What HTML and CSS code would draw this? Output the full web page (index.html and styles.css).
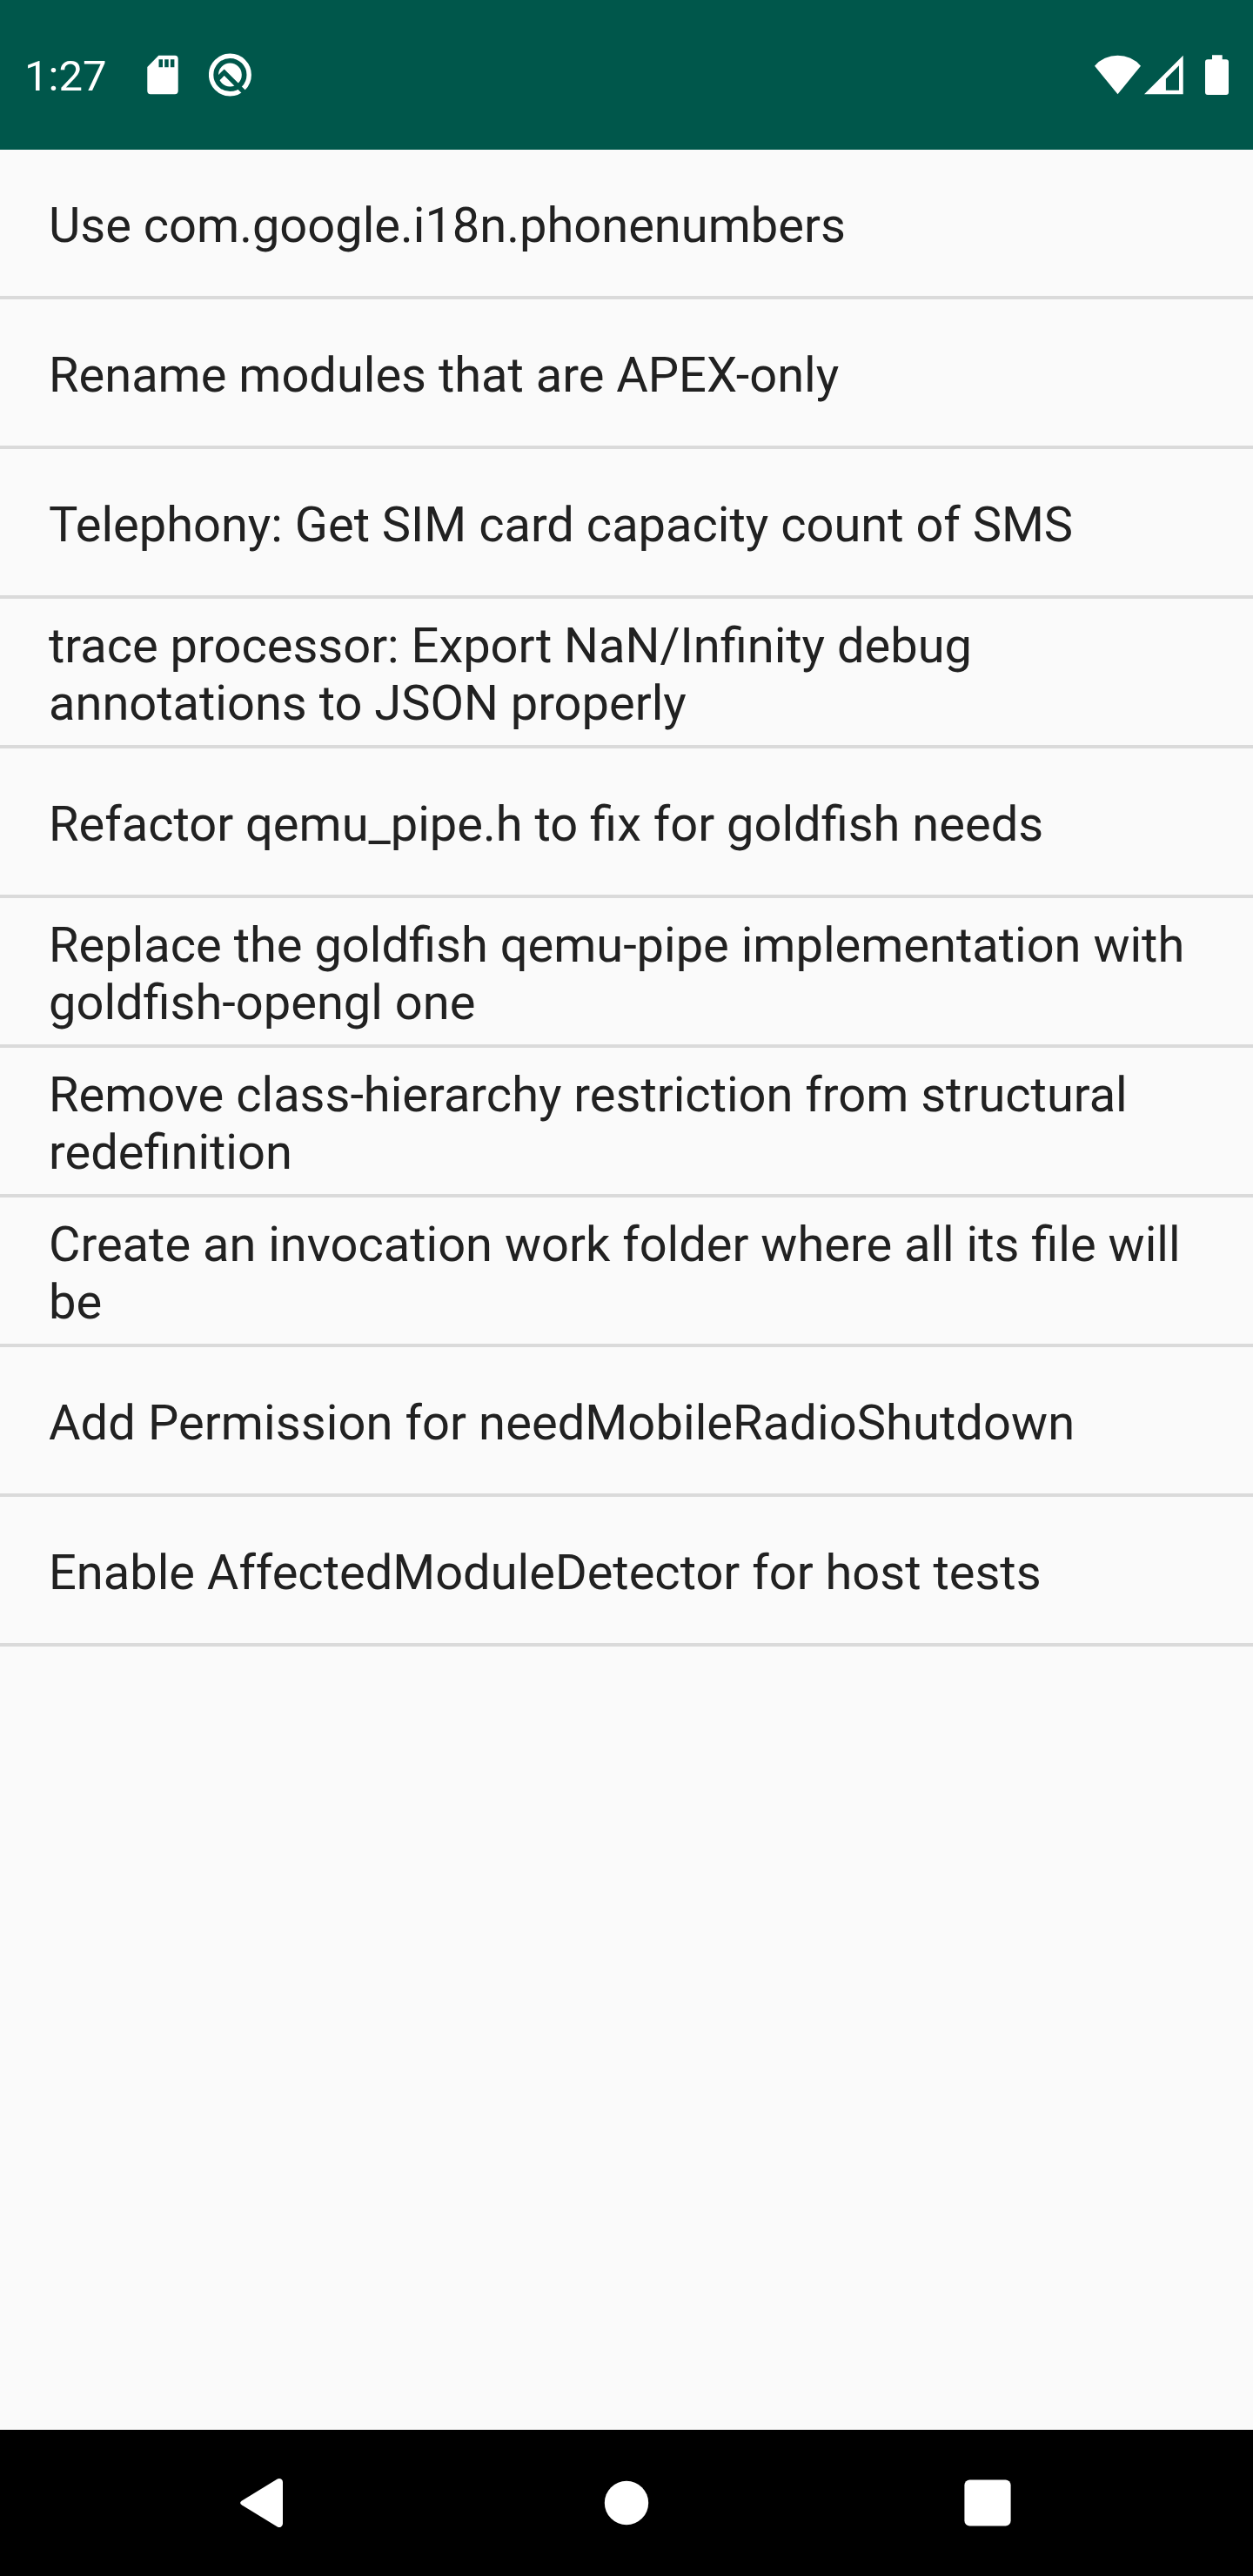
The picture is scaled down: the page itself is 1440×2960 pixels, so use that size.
FILE: index.html
```html
<!DOCTYPE html>
<html lang="en">
<head>
<meta charset="utf-8">
<title>Changes</title>
<link rel="stylesheet" href="styles.css">
</head>
<body>
<header class="status">
  <span class="clock">1:27</span>
  <svg class="sd" width="36" height="46" viewBox="0 0 36 46"><path fill="#fff" fill-rule="evenodd" d="M13.3 .7H32Q35.7 .7 35.7 4.7V41.2Q35.7 45.2 32 45.2H4Q.3 45.2 .3 41.2V14ZM13.5 5.3V14.3H18V5.3ZM20.2 5.3V14.3H24.7V5.3ZM26.9 5.3V14.3H31.4V5.3Z"/></svg>
  <svg class="q" width="49" height="50" viewBox="0 0 49 50"><circle cx="24.4" cy="25" r="21.8" fill="none" stroke="#fff" stroke-width="5.4"/><circle cx="24.4" cy="25" r="13.4" fill="#fff"/><path d="M9 30.8L17.7 22.2L44 48.5" fill="none" stroke="#00574b" stroke-width="5.4"/></svg>
  <span class="spacer"></span>
  <svg class="wifi" width="53" height="46" viewBox="0 0 53 46"><path fill="#fff" d="M0 12.7A35.3 35.3 0 0 1 53 12.7L26.5 45.3Z"/></svg>
  <svg class="signal" width="45" height="46" viewBox="0 0 45 46"><path fill="#fff" fill-rule="evenodd" d="M0 45.3L44.7 .8V45.3ZM24.9 27.6V40.7H40V12.2Z"/></svg>
  <svg class="battery" width="27" height="46" viewBox="0 0 27 46"><path fill="#fff" d="M8 .3H19.7V5.3H24Q27 5.3 27 8.3V43Q27 46 24 46H3Q0 46 0 43V8.3Q0 5.3 3 5.3H8Z"/></svg>
</header>
<main class="list">
  <div class="row"><p>Use com.google.i18n.phonenumbers</p></div>
  <div class="row"><p>Rename modules that are APEX-only</p></div>
  <div class="row"><p>Telephony: Get SIM card capacity count of SMS</p></div>
  <div class="row"><p>trace processor: Export NaN/Infinity debug annotations to JSON properly</p></div>
  <div class="row"><p>Refactor qemu_pipe.h to fix for goldfish needs</p></div>
  <div class="row"><p>Replace the goldfish qemu-pipe implementation with goldfish-opengl one</p></div>
  <div class="row"><p>Remove class-hierarchy restriction from structural redefinition</p></div>
  <div class="row"><p>Create an invocation work folder where all its file will be</p></div>
  <div class="row"><p class="loose">Add Permission for needMobileRadioShutdown</p></div>
  <div class="row"><p>Enable AffectedModuleDetector for host tests</p></div>
</main>
<footer class="nav">
  <svg width="58" height="58" viewBox="276 2847 58 58"><path fill="#fff" d="M278 2873.4L318.8 2848.6Q321 2847.4 323 2848.6Q325 2850 325 2852V2900Q325 2902 323 2903.4Q321 2904.6 318.8 2903.4L278 2878.6Q274.2 2876 278 2873.4Z"/></svg>
  <svg width="58" height="58" viewBox="0 0 58 58"><circle cx="29" cy="29" r="25.2" fill="#fff"/></svg>
  <svg width="58" height="58" viewBox="0 0 58 58"><rect x="2.4" y="2.4" width="53.2" height="53.2" rx="6" fill="#fff"/></svg>
</footer>
</body>
</html>
```
FILE: styles.css
```css
* { box-sizing: border-box; }
body {
  margin: 0;
  width: 1440px;
  height: 2960px;
  display: flex;
  flex-direction: column;
  background: #fafafa;
  font-family: Roboto, sans-serif;
  color: #212121;
}
.status {
  height: 172px;
  background: #00574b;
  color: #fff;
  display: flex;
  align-items: center;
  padding: 0 28px;
}
.clock { font-size: 49px; width: 141px; padding-top: 3px; }
.q { margin-left: 35px; }
.spacer { flex: 1; }
.signal { margin-left: 4px; }
.battery { margin-left: 25px; }
.list { flex: 1; }
.row {
  height: 172px;
  display: flex;
  align-items: center;
  padding: 6px 56px 0;
  border-bottom: 4px solid #dadada;
}
.row p { margin: 0; font-size: 56px; line-height: 66px; }
.row .loose { letter-spacing: 0.09px; }
.nav {
  height: 168px;
  background: #000;
  display: grid;
  grid-template-columns: repeat(3, 415px);
  justify-content: center;
  justify-items: center;
  align-items: center;
}
```
